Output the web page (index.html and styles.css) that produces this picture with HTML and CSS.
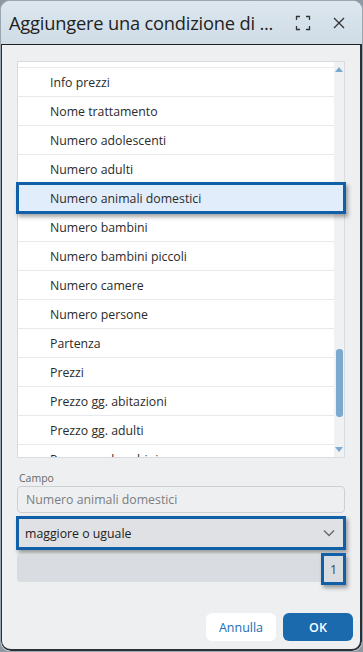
FILE: index.html
```html
<!DOCTYPE html>
<html>
<head>
<meta charset="utf-8">
<link rel="stylesheet" href="styles.css">
</head>
<body>
<div class="window">
  <div class="titlebar">
    <div class="title">Aggiungere una condizione di ...</div>
    <div class="tb-icons">
      <svg class="ico" width="16" height="16" viewBox="0 0 16 16" fill="none" stroke="#333" stroke-width="1.3">
        <path d="M1.5 5V1.5H5M11 1.5h3.5V5M14.5 11v3.5H11M5 14.5H1.5V11"/>
      </svg>
      <svg class="ico" width="14" height="14" viewBox="0 0 14 14" fill="none" stroke="#333" stroke-width="1.3">
        <path d="M2 2l10 10M12 2L2 12"/>
      </svg>
    </div>
  </div>
  <div class="body">
    <div class="listbox">
      <div class="list">
        <div class="row partial"></div>
        <div class="row">Info prezzi</div>
        <div class="row">Nome trattamento</div>
        <div class="row">Numero adolescenti</div>
        <div class="row">Numero adulti</div>
        <div class="row selected">Numero animali domestici</div>
        <div class="row">Numero bambini</div>
        <div class="row">Numero bambini piccoli</div>
        <div class="row">Numero camere</div>
        <div class="row">Numero persone</div>
        <div class="row">Partenza</div>
        <div class="row">Prezzi</div>
        <div class="row">Prezzo gg. abitazioni</div>
        <div class="row">Prezzo gg. adulti</div>
        <div class="row">Prezzo gg. bambini</div>
      </div>
      <div class="scrollbar">
        <div class="arrow up"></div>
        <div class="track"><div class="thumb"></div></div>
        <div class="arrow down"></div>
      </div>
    </div>
    <div class="label">Campo</div>
    <div class="input">Numero animali domestici</div>
    <div class="select">
      <span>maggiore o uguale</span>
      <svg width="12" height="8" viewBox="0 0 12 8" fill="none" stroke="#666" stroke-width="1.3"><path d="M1 1.5l5 5 5-5"/></svg>
    </div>
    <div class="number"><span class="num">1</span></div>
    <div class="spacer"></div>
    <div class="buttons">
      <button class="btn cancel">Annulla</button>
      <button class="btn ok">OK</button>
    </div>
  </div>
</div>
</body>
</html>
```

FILE: styles.css
```css
* { box-sizing: border-box; }
html, body { margin: 0; padding: 0; }
body {
  width: 363px;
  height: 652px;
  background: #8c98a4;
  font-family: "Open Sans", "Noto Sans", sans-serif;
  overflow: hidden;
}
.window {
  width: 363px;
  height: 652px;
  border-radius: 10px;
  overflow: hidden;
  background: #eeeff1;
  border: 1px solid #9aa5ae;
  display: flex;
  flex-direction: column;
}
.titlebar {
  height: 43px;
  flex: none;
  background: linear-gradient(#dce7ef, #cfdce6);
  display: flex;
  align-items: center;
  padding: 0 0 0 8px;
}
.title {
  flex: 1;
  font-family: "Open Sans", sans-serif;
  font-size: 18.3px;
  color: #222;
  white-space: nowrap;
  letter-spacing: -0.2px;
}
.tb-icons {
  display: flex;
  align-items: center;
  gap: 21px;
  padding-right: 16px;
}
.body {
  flex: 1;
  border-top: 1px solid #1d2226;
  border-left: 1px solid #2a3036;
  border-right: 2px solid #2a3036;
  border-bottom: 2px solid #2a3036;
  border-radius: 0 0 10px 10px;
  background: #eeeff1;
  display: flex;
  flex-direction: column;
  padding: 16px 15px 8px 15px;
}
.listbox {
  height: 397px;
  flex: none;
  background: #fff;
  border: 1px solid #d8dce1;
  display: flex;
  position: relative;
}
.list {
  flex: 1;
  min-width: 0;
  overflow: visible;
  clip-path: inset(0 -30px 0 -6px);
  position: relative;
  z-index: 2;
}
.row {
  height: 29px;
  border-bottom: 1px solid #e6e9ed;
  display: flex;
  align-items: center;
  padding-left: 32px;
  font-size: 12.3px;
  color: #2b2b2b;
  white-space: nowrap;
}
.row.partial { height: 6px; }
.row.selected {
  position: relative;
  height: 32px;
  margin: -2px -12px -1px -2px;
  padding-left: 31px;
  background: #e2edfb;
  border: 3px solid #115fa6;
  box-shadow: 2px 3px 4px rgba(0,0,0,0.35);
}
.scrollbar {
  width: 10px;
  flex: none;
  display: flex;
  flex-direction: column;
  align-items: center;
  background: #f0f1f3;
}
.arrow {
  width: 0; height: 0;
  border-left: 4px solid transparent;
  border-right: 4px solid transparent;
  margin: 3px 0;
}
.arrow.up { border-bottom: 5px solid #7aaacf; margin-top: 5px; }
.arrow.down { border-top: 5px solid #7aaacf; margin-bottom: 5px; }
.track { flex: 1; width: 100%; display: flex; flex-direction: column; justify-content: flex-end; align-items: center; padding-bottom: 27px; }
.thumb { width: 7px; height: 68px; background: #7aaacf; border-radius: 3px; }
.label {
  margin-top: 13px;
  font-size: 10.5px;
  color: #666;
  padding-left: 2px;
  line-height: 14px;
}
.input {
  margin-top: 1px;
  height: 27px;
  border: 1px solid #ccd0d5;
  border-radius: 4px;
  display: flex;
  align-items: center;
  padding-left: 8px;
  font-size: 12.3px;
  color: #7a7d80;
}
.select {
  margin: 3px -1px 0 -1px;
  height: 34px;
  border: 3px solid #115fa6;
  background: #dfe1e4;
  box-shadow: 2px 3px 4px rgba(0,0,0,0.35);
  display: flex;
  align-items: center;
  justify-content: space-between;
  padding: 0 8px 0 6px;
  font-size: 12.3px;
  color: #222;
}
.number {
  margin-top: 5px;
  height: 27px;
  background: #d9dce0;
  border-radius: 3px;
  display: flex;
  justify-content: flex-end;
  align-items: stretch;
}
.num {
  margin: -2px -1px -3px 0;
  width: 25px;
  border: 3px solid #115fa6;
  box-shadow: 2px 3px 4px rgba(0,0,0,0.35);
  display: flex;
  align-items: center;
  justify-content: center;
  font-size: 12.5px;
  color: #444;
  background: #d9dce0;
}
.spacer { flex: 1; }
.buttons {
  display: flex;
  justify-content: flex-end;
  gap: 7px;
  margin-right: -8px;
  margin-bottom: 0;
}
.btn {
  width: 70px;
  height: 28px;
  border: none;
  border-radius: 6px;
  font-family: "Open Sans", sans-serif;
  font-size: 12.5px;
}
.btn.cancel { background: #fff; color: #1b6db3; }
.btn.ok { background: #1b6aad; color: #fff; font-weight: 600; }
```
